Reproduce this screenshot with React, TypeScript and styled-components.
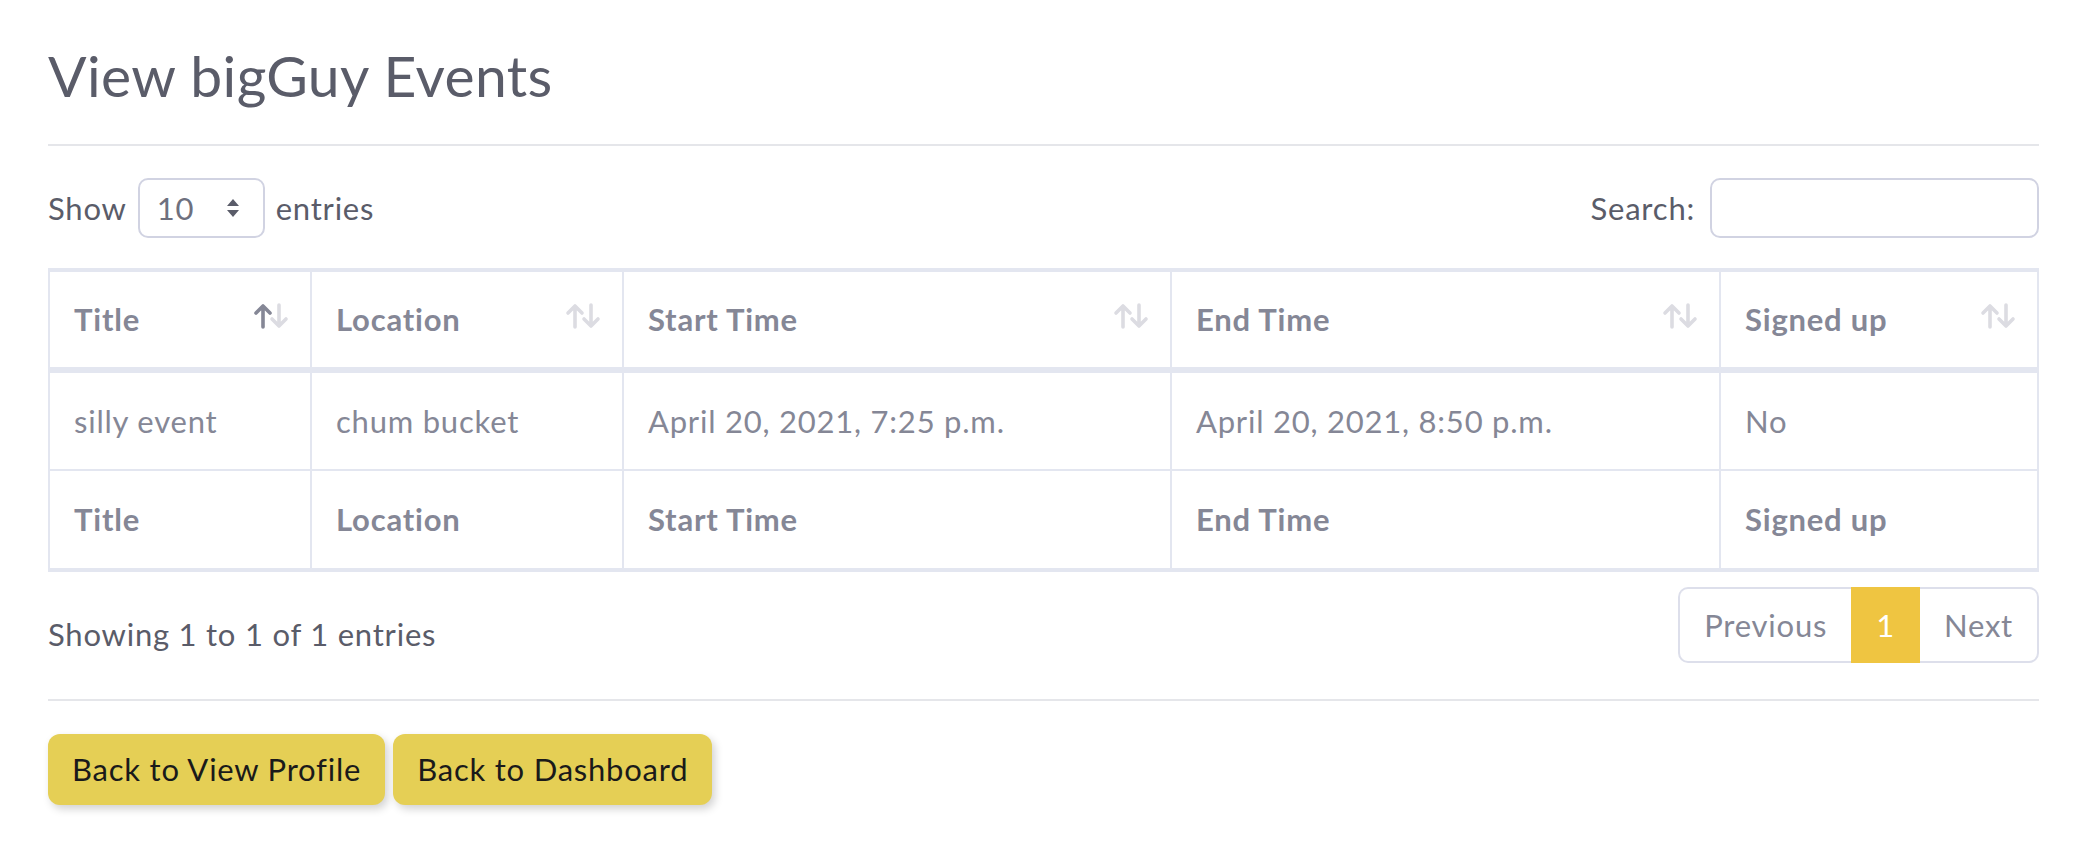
import React from "react";
import styled, { createGlobalStyle } from "styled-components";

const GlobalStyle = createGlobalStyle`
  html, body { margin: 0; padding: 0; background: #fff; }
  body { font-family: Lato, "Open Sans", sans-serif; color: #858796; }
  * { box-sizing: border-box; }
`;

const Page = styled.div`
  padding: 42px 49px 40px 48px;
  font-size: 31px;
  line-height: 45px;
  letter-spacing: 0.78px;
`;

const Title = styled.h2`
  margin: 0;
  font-size: 57px;
  line-height: 67px;
  font-weight: 400;
  letter-spacing: 0.4px;
  color: #5a5c69;
`;

const Rule = styled.hr<{ $top: number }>`
  margin: ${(p) => p.$top}px 0 0;
  border: 0;
  border-top: 2px solid #e5e6ea;
`;

const Controls = styled.div`
  margin-top: 32px;
  display: flex;
  justify-content: space-between;
  align-items: center;
  height: 60px;
`;

const Label = styled.label`
  display: flex;
  align-items: center;
  gap: 11px;
  color: #5a5c69;
`;

const SelectBox = styled.div`
  width: 127px;
  height: 60px;
  border: 2px solid #d1d3e2;
  border-radius: 10px;
  display: flex;
  align-items: center;
  justify-content: space-between;
  padding: 0 23px 0 17px;
  color: #6e707e;
`;

const SearchInput = styled.input`
  width: 329px;
  height: 60px;
  border: 2px solid #d1d3e2;
  border-radius: 10px;
  margin-left: 4px;
  font: inherit;
  outline: none;
`;

const Table = styled.table`
  margin-top: 30px;
  width: 100%;
  border-collapse: separate;
  border-spacing: 0;
  border: 2px solid #e3e6f0;
  table-layout: fixed;
`;

const HeadCell = styled.th<{ $foot?: boolean }>`
  text-align: left;
  font-weight: 700;
  color: #858796;
  padding: ${(p) => (p.$foot ? "26px 24px 26px" : "25px 24px")};
  border-top: 2px solid #e3e6f0;
  border-bottom: ${(p) => (p.$foot ? "2px solid #e3e6f0" : "4px solid #e3e6f0")};
  border-right: 2px solid #e3e6f0;
  &:last-child { border-right: 0; }
`;

const Cell = styled.td`
  padding: 26px 24px 25px;
  border-top: 2px solid #e3e6f0;
  border-right: 2px solid #e3e6f0;
  color: #858796;
  &:last-child { border-right: 0; }
`;

const HeadInner = styled.div`
  display: flex;
  justify-content: space-between;
  align-items: flex-start;
`;

const SortIcon = styled.svg`
  width: 38px;
  height: 26px;
  margin-top: 6px;
  margin-right: -4px;
  flex: none;
`;

const Footer = styled.div`
  margin-top: 15px;
  display: flex;
  justify-content: space-between;
  align-items: flex-start;
`;

const Info = styled.div`
  padding-top: 25px;
  color: #5a5c69;
`;

const Pager = styled.ul`
  list-style: none;
  margin: 0;
  padding: 0;
  display: flex;
`;

const PageItem = styled.li<{ $active?: boolean; $pos?: "first" | "last" }>`
  height: 76px;
  display: flex;
  align-items: center;
  padding: 0 ${(p) => (p.$active ? "25px" : "24px")};
  color: ${(p) => (p.$active ? "#fff" : "#858796")};
  background: ${(p) => (p.$active ? "#efc541" : "#fff")};
  border-top: 2px solid ${(p) => (p.$active ? "#efc541" : "#dddfeb")};
  border-bottom: 2px solid ${(p) => (p.$active ? "#efc541" : "#dddfeb")};
  border-left: ${(p) => (p.$pos === "first" ? "2px solid #dddfeb" : "0")};
  border-right: ${(p) => (p.$pos === "last" ? "2px solid #dddfeb" : "0")};
  border-radius: ${(p) =>
    p.$pos === "first" ? "10px 0 0 10px" : p.$pos === "last" ? "0 10px 10px 0" : "0"};
`;

const Actions = styled.div`
  margin-top: 33px;
  display: flex;
  gap: 8px;
`;

const Button = styled.button`
  height: 71px;
  padding: 0 24px;
  font: inherit;
  letter-spacing: inherit;
  color: #1a1a1a;
  background: #e5cf55;
  border: 0;
  border-radius: 12px;
  box-shadow: 3px 4px 8px rgba(0, 0, 0, 0.18);
`;

const Sort = ({ active }: { active?: boolean }) => (
  <SortIcon viewBox="0 0 38 26">
    <g fill="none" strokeWidth="3.6" strokeLinecap="round" strokeLinejoin="round">
      <path d="M11 24V3M4 10l7-7 7 7" stroke={active ? "#858796" : "#dcdce2"} />
      <path d="M27 2v21M20 16l7 7 7-7" stroke="#dcdce2" />
    </g>
  </SortIcon>
);

const SelectArrows = () => (
  <svg width="14" height="20" viewBox="0 0 14 20">
    <path d="M7 1l6 7H1z M7 19l6-7H1z" fill="#5a5c69" />
  </svg>
);

const columns = ["Title", "Location", "Start Time", "End Time", "Signed up"];
const widths = [262, 312, 548, 549, 316];
const row = ["silly event", "chum bucket", "April 20, 2021, 7:25 p.m.", "April 20, 2021, 8:50 p.m.", "No"];

export default function App() {
  return (
    <>
      <GlobalStyle />
      <Page>
        <Title>View bigGuy Events</Title>
        <Rule $top={35} />
        <Controls>
          <Label>
            Show
            <SelectBox>
              10
              <SelectArrows />
            </SelectBox>
            entries
          </Label>
          <Label>
            Search:
            <SearchInput type="search" />
          </Label>
        </Controls>
        <Table>
          <colgroup>
            {widths.map((w, i) => (
              <col key={i} style={{ width: w }} />
            ))}
          </colgroup>
          <thead>
            <tr>
              {columns.map((c, i) => (
                <HeadCell key={c}>
                  <HeadInner>
                    <span>{c}</span>
                    <Sort active={i === 0} />
                  </HeadInner>
                </HeadCell>
              ))}
            </tr>
          </thead>
          <tbody>
            <tr>
              {row.map((v, i) => (
                <Cell key={i}>{v}</Cell>
              ))}
            </tr>
          </tbody>
          <tfoot>
            <tr>
              {columns.map((c) => (
                <HeadCell key={c} $foot>
                  {c}
                </HeadCell>
              ))}
            </tr>
          </tfoot>
        </Table>
        <Footer>
          <Info>Showing 1 to 1 of 1 entries</Info>
          <Pager>
            <PageItem $pos="first">Previous</PageItem>
            <PageItem $active>1</PageItem>
            <PageItem $pos="last">Next</PageItem>
          </Pager>
        </Footer>
        <Rule $top={36} />
        <Actions>
          <Button>Back to View Profile</Button>
          <Button>Back to Dashboard</Button>
        </Actions>
      </Page>
    </>
  );
}
